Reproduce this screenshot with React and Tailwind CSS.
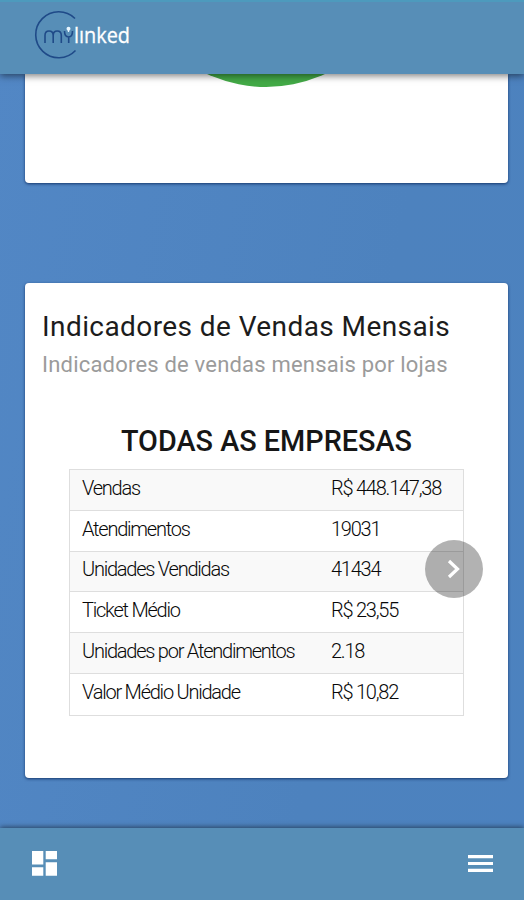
import React from 'react';

const ROWS = [
  { label: 'Vendas', value: 'R$ 448.147,38' },
  { label: 'Atendimentos', value: '19031' },
  { label: 'Unidades Vendidas', value: '41434' },
  { label: 'Ticket Médio', value: 'R$ 23,55' },
  { label: 'Unidades por Atendimentos', value: '2.18' },
  { label: 'Valor Médio Unidade', value: 'R$ 10,82' },
];

function Logo() {
  return (
    <svg className="overflow-visible" width="120" height="52" viewBox="0 0 120 52" fill="none">
      <path d="M41 10.5A23 23 0 1 0 41.5 42.5" stroke="#1f4a88" strokeWidth="1.6" />
      {/* m and y monogram */}
      <path
        d="M11 35V27.5Q11 23 15 23Q19.2 23 19.2 27.5V35M19.2 27.5Q19.2 23 23.2 23Q27.3 23 27.3 27.5V35"
        stroke="#1f4a88"
        strokeWidth="1.6"
      />
      <path d="M30.5 23Q30.5 29 34.7 29Q38.5 29 38.5 23M34.7 29V35" stroke="#1f4a88" strokeWidth="1.6" />
      <circle cx="34.5" cy="20.8" r="2" fill="#e8f6ff" />
      <path d="M34.5 21V24" stroke="#e8f6ff" strokeWidth="1.3" />
      <text
        x="40"
        y="35"
        textLength="56"
        lengthAdjust="spacingAndGlyphs"
        fill="#fff"
        stroke="#fff"
        strokeWidth="0.3"
        fontFamily="'Open Sans', sans-serif"
        fontSize="21"
      >
        lınked
      </text>
    </svg>
  );
}

function Header() {
  return (
    <header className="relative z-10 flex h-[74px] shrink-0 items-start border-t-2 border-[#4d9abd] bg-[#578eb7] pl-[34px] pt-[6px] shadow-[0_2px_7px_rgba(0,0,0,0.5)]">
      <Logo />
    </header>
  );
}

function DashboardIcon() {
  return (
    <svg width="25" height="25" viewBox="0 0 25 25" fill="currentColor">
      <path d="M0 0H11.3V13.5H0ZM0 16.3H11.3V24.7H0ZM13.7 0H25V8.3H13.7ZM13.7 11.2H25V24.7H13.7Z" />
    </svg>
  );
}

function MenuIcon() {
  return (
    <svg width="25" height="18" viewBox="0 0 25 18" fill="currentColor">
      <path d="M0 0H25V3.2H0ZM0 6.9H25V10.1H0ZM0 13.8H25V17H0Z" />
    </svg>
  );
}

function SalesTable() {
  return (
    <div className="ml-[44px] mt-[10px] w-[395px] border border-[#dedede] text-[20px] font-light tracking-[-1.23px] text-[#080808]">
      {ROWS.map((row) => (
        <div
          key={row.label}
          className="flex h-[40.8px] items-center border-b border-[#dedede] pb-[4px] pl-[12px] odd:bg-[#f9f9f9] last:border-b-0"
        >
          <span className="w-[249px] whitespace-nowrap">{row.label}</span>
          <span className="whitespace-nowrap">{row.value}</span>
        </div>
      ))}
    </div>
  );
}

export default function App() {
  return (
    <div className="flex h-[900px] w-[524px] flex-col overflow-hidden bg-[linear-gradient(100deg,#5287c5_0%,#4d82be_65%,#4c82bf_100%)] font-['Roboto',sans-serif]">
      <Header />
      <main className="flex grow flex-col pl-[25px] pr-[16px]">
        <section className="flex h-[108.5px] shrink-0 flex-col items-center overflow-hidden rounded-b-[4px] bg-white pr-[1px] shadow-[0_1px_3px_rgba(0,30,80,0.75)]">
          <div className="-mt-[267px] size-[280px] shrink-0 rounded-full bg-[#43aa47]" />
        </section>
        <section className="relative mt-[100.5px] h-[495px] shrink-0 rounded-[4px] bg-white pt-[26px] shadow-[0_1px_3px_rgba(0,30,80,0.75)]">
          <h1 className="ml-[17px] whitespace-nowrap text-[28px] leading-[36px] tracking-[0.42px] text-[#1c1c1c]">
            Indicadores de Vendas Mensais
          </h1>
          <p className="ml-[17px] mt-[5px] whitespace-nowrap text-[22px] leading-[30px] tracking-[0.2px] text-[#9b9b9b]">
            Indicadores de vendas mensais por lojas
          </p>
          <h2 className="mt-[43px] text-center text-[28.8px] font-medium leading-[36px] text-[#161616]">TODAS AS EMPRESAS</h2>
          <SalesTable />
          <button className="absolute right-[25px] top-[257px] flex size-[58px] items-center justify-center rounded-full bg-black/30 text-white">
            <svg width="14" height="20" viewBox="0 0 14 20" fill="none" stroke="currentColor" strokeWidth="3.2">
              <path d="M2 2L10.5 10L2 18" />
            </svg>
          </button>
        </section>
      </main>
      <footer className="relative z-10 flex h-[72px] shrink-0 items-center justify-between bg-[#578eb7] pb-[1px] pl-[32px] pr-[31px] text-white shadow-[0_-1px_5px_rgba(0,0,0,0.5)]">
        <DashboardIcon />
        <MenuIcon />
      </footer>
    </div>
  );
}
